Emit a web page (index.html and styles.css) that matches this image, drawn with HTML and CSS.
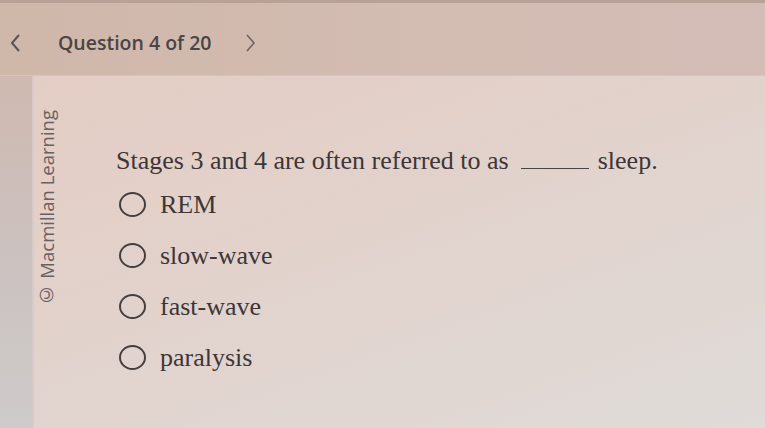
FILE: index.html
```html
<!DOCTYPE html>
<html>
<head>
    <title>Question 4 of 20</title>
    <link rel="stylesheet" href="styles.css">
</head>
<body>
    <header class="topbar">
        <button class="nav nav-prev" aria-label="Previous question">
            <svg width="12" height="20" viewBox="0 0 12 20"><path d="M10 2 L3 10 L10 18" fill="none" stroke="currentColor" stroke-width="2"/></svg>
        </button>
        <h1 class="title">Question 4 of 20</h1>
        <button class="nav nav-next" aria-label="Next question">
            <svg width="12" height="20" viewBox="0 0 12 20"><path d="M2 2 L9 10 L2 18" fill="none" stroke="currentColor" stroke-width="1.6"/></svg>
        </button>
    </header>
    <main class="content">
        <div class="rail"></div>
        <div class="credit"><span>© Macmillan Learning</span></div>
        <section class="question">
            <p class="prompt">Stages 3 and 4 are often referred to as <span class="blank"></span> sleep.</p>
            <ul class="options">
                <li><span class="radio"></span>REM</li>
                <li><span class="radio"></span>slow-wave</li>
                <li><span class="radio"></span>fast-wave</li>
                <li><span class="radio"></span>paralysis</li>
            </ul>
        </section>
    </main>
</body>
</html>
```

FILE: styles.css
```css
html, body { height: 100%; }
body { margin: 0; background: #e2d3cd; font-family: "Open Sans", sans-serif; overflow: hidden; }

.topbar { height: 71px; padding-top: 1px; border-top: 3px solid #b8a297; background: linear-gradient(90deg, #cfb7aa, #d3bcb2 60%, #d4bdb6); display: flex; align-items: center; border-bottom: 1px solid #d8c4bc; }
.nav { background: none; border: none; padding: 0; color: #5c5252; display: flex; margin-top: 6px; }
.nav-prev { margin-left: 9px; }
.nav-next { margin-left: 33px; color: #6e6262; }
.title { margin: 5px 0 0 37px; font-size: 19.5px; font-weight: 600; color: #4a4447; }

.content { display: flex; height: calc(100% - 76px); background: linear-gradient(160deg, #e4cdc4 0%, #e2d2cc 45%, #dfdbd8 100%); }
.rail { width: 32px; border-right: 2px solid #d6cbc8; background: linear-gradient(180deg, #cfb9b0, #cbc3c2 60%, #cfcbca); }
.credit { width: 26px; padding-top: 34px; color: #6a6062; font-size: 18.5px; }
.credit span { display: inline-block; writing-mode: vertical-rl; transform: rotate(180deg); }

.question { padding-left: 56px; font-family: "Liberation Serif", serif; color: #3d3637; font-size: 26px; }
.prompt { margin: 70px 0 0; line-height: 30px; }
.blank { display: inline-block; width: 68px; border-bottom: 1px solid #4a4344; margin: 0 2px 0 6px; }
.options { list-style: none; margin: 3px 0 0; padding: 0; }
.options li { display: flex; align-items: center; height: 51px; }
.radio { width: 23px; height: 21px; border: 2px solid #453e3f; border-radius: 50%; margin: 0 14px 0 3px; }
```
